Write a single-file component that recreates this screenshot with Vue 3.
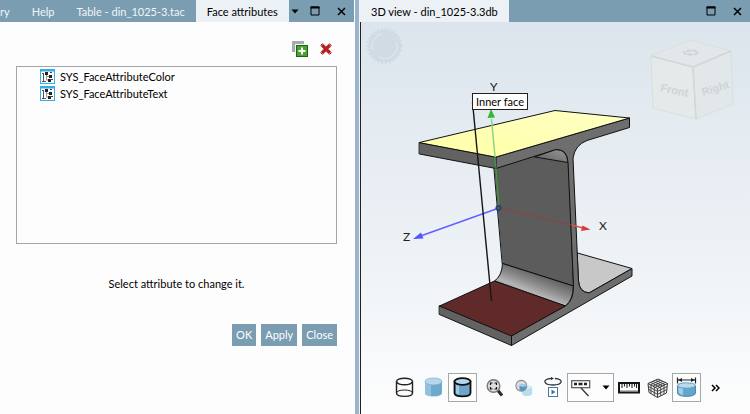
<script setup>
import { ref } from 'vue'

const attributes = ref(['SYS_FaceAttributeColor', 'SYS_FaceAttributeText'])
const selected = ref('')
</script>

<template>
  <main class="workspace">
    <section class="pane" aria-label="Face attributes">
      <header class="bar">
        <nav class="tabs">
          <button class="tab first" type="button">ry</button>
          <button class="tab" type="button">Help</button>
          <button class="tab" type="button">Table - din_1025-3.tac</button>
          <button class="tab active" type="button">Face attributes</button>
        </nav>
        <div class="win">
          <button type="button" class="win-btn narrow" aria-label="Tab list">
            <svg width="8" height="5" viewBox="0 0 8 5"><path d="M0.500 0.500h7L4 4.500z" /></svg>
          </button>
          <button type="button" class="win-btn" aria-label="Maximize">
            <svg width="10" height="10" viewBox="0 0 10 10"><path d="M1 1h8v8H1z" fill="none" stroke="#000" /><path d="M0.500 0.500h9v2h-9z" /></svg>
          </button>
          <button type="button" class="win-btn" aria-label="Close">
            <svg width="9" height="9" viewBox="0 0 9 9"><path d="M1 1l7 7M8 1L1 8" stroke="#000" stroke-width="1.500" /></svg>
          </button>
        </div>
      </header>

      <div class="form">
        <div class="actions">
          <button type="button" aria-label="Add attribute">
            <svg width="16" height="16" viewBox="0 0 16 16">
              <path d="M1.500 11V1.500H12" fill="none" stroke="#a5abb1" stroke-width="3" />
              <path d="M3.500 12V3.500H12" fill="none" stroke="#f4f6f7" />
              <rect x="4.500" y="4.500" width="11" height="11" fill="#45a52b" stroke="#246018" />
              <path d="M10 6.500v7M6.500 10h7" stroke="#fff" stroke-width="2" />
            </svg>
          </button>
          <button type="button" aria-label="Delete attribute">
            <svg width="12" height="12" viewBox="0 0 12 12">
              <path d="M2 2l8 8M10 2l-8 8" stroke="#b3201f" stroke-width="3.200" />
              <path d="M0.500 2.500l2-2M9.500 0.500l2 2M0.500 9.500l2 2M9.500 11.500l2-2" stroke="#8d1b1b" stroke-width="1" />
            </svg>
          </button>
        </div>

        <ul class="list">
          <li v-for="name in attributes" :key="name">
            <button type="button" class="row" @click="selected = name">
              <svg width="15" height="15" viewBox="0 0 15 15">
                <rect x="0.500" y="0.500" width="14" height="14" fill="#fff" stroke="#35ade6" />
                <path d="M1 1h13v1.500H1z" fill="#35ade6" />
                <path d="M2 4.500h2M3.500 4.500v8M2 12.500h4" fill="none" stroke="#555" />
                <path d="M6.500 5v6h2M6.500 7.500h3" fill="none" stroke="#999" />
                <path d="M5 3h3v3H5zM9 6h3v3H9zM8 10h3v3H8z" fill="#222" />
                <path d="M10 3.500h2M10 10.500h3" stroke="#444" />
              </svg>
              <span>{{ name }}</span>
            </button>
          </li>
        </ul>

        <p class="hint">Select attribute to change it.</p>

        <div class="buttons">
          <button type="button">OK</button>
          <button type="button">Apply</button>
          <button type="button">Close</button>
        </div>
      </div>
    </section>

    <div class="splitter"></div>

    <section class="pane" aria-label="3D view">
      <header class="bar">
        <nav class="tabs">
          <button class="tab active" type="button">3D view - din_1025-3.3db</button>
        </nav>
        <div class="win">
          <button type="button" class="win-btn" aria-label="Maximize view">
            <svg width="10" height="10" viewBox="0 0 10 10"><path d="M1 1h8v8H1z" fill="none" stroke="#000" /><path d="M0.500 0.500h9v2h-9z" /></svg>
          </button>
          <button type="button" class="win-btn" aria-label="Close view">
            <svg width="9" height="9" viewBox="0 0 9 9"><path d="M1 1l7 7M8 1L1 8" stroke="#000" stroke-width="1.500" /></svg>
          </button>
        </div>
      </header>

      <div class="viewport">
        <svg class="scene" viewBox="361 22 389 351" role="img" aria-label="I-beam profile">
          <defs>
            <linearGradient id="yellow" x1="0" y1="1" x2="1" y2="0">
              <stop offset="0" stop-color="#ffffa6" />
              <stop offset="1" stop-color="#ffffc4" />
            </linearGradient>
            <linearGradient id="fillet" gradientUnits="userSpaceOnUse" x1="540" y1="274" x2="531" y2="297">
              <stop offset="0" stop-color="#626262" />
              <stop offset="0.450" stop-color="#8c8c8c" />
              <stop offset="0.800" stop-color="#b5b5b5" />
              <stop offset="1" stop-color="#a0a0a0" />
            </linearGradient>
            <linearGradient id="under" x1="0" y1="1" x2="1" y2="0">
              <stop offset="0" stop-color="#5c5c5c" />
              <stop offset="1" stop-color="#999" />
            </linearGradient>
          </defs>

          <!-- navigation wheel -->
          <g fill="none">
            <circle cx="384.500" cy="46" r="16.500" fill="#d0dce5" />
            <circle cx="384.500" cy="46" r="17" stroke="#d0dce5" stroke-width="2" stroke-dasharray="2 2" />
            <path d="M373 50a12 12 0 0 1 9-16M396 42a12 12 0 0 1-17 15" stroke="#dce5ec" stroke-width="1.500" />
          </g>

          <!-- view cube -->
          <g stroke-linejoin="round">
            <path d="M651 56L690 40L731 51L693 67z" fill="#e2e8ea" stroke="#dcdfdf" />
            <path d="M651 56L693 67L696 119L653 108z" fill="#e4e9e9" stroke="#dbdede" />
            <path d="M693 67L731 51L733 104L696 119z" fill="#e2e8e9" stroke="#dbdede" />
            <path d="M651 56L693 67L731 51M693 67L696 119" fill="none" stroke="#d3d5d6" stroke-width="1.500" />
            <ellipse cx="691" cy="52.500" rx="7" ry="2" fill="none" stroke="#d0d2d4" stroke-width="2" stroke-dasharray="5 1" />
          </g>
          <g class="cube-text">
            <text transform="translate(660 91) rotate(12)">Front</text>
            <text transform="translate(703 96) rotate(-17)">Right</text>
          </g>

          <!-- beam -->
          <g stroke="#111" stroke-linejoin="round" stroke-linecap="round">
            <path d="M577.500 253L632 268.500L589 293Q579 292 578.500 281z" fill="#c8c8c8" />
            <path d="M494 165L568 146L573.500 286L502.500 263.500z" fill="#5c5c5c" />
            <path d="M535 157L568 162.500Q567 149 556 149.500z" fill="url(#under)" />
            <path d="M502.500 263.500L573.500 286Q573 300 565.500 306L494.500 281Q502 276 502.500 263.500z" fill="url(#fillet)" />
            <path d="M439.500 306L494.500 281L565.500 306L511.500 336z" fill="#612a2a" />
            <path d="M439.500 306L511.500 336V345.500L439.500 314.500z" fill="#626262" />
            <path d="M496 157L629.500 118V127.500L587 140.500Q575 145 573 158L578.500 281Q579 292 589 293L632 268.500V276L511.500 345.500V336L565.500 306Q574 300 573.500 285L568 162Q567 149 556 149.500L496 168.500z" fill="#6e6e6e" />
            <path d="M419.500 142.500L496 157V168.500L419.500 154z" fill="#626262" />
            <path d="M419.500 142.500L555 110.500L629.500 118L496 157z" fill="url(#yellow)" />
          </g>

          <!-- axes -->
          <g fill="none">
            <path d="M491.500 119L495 157" stroke="#8ad982" stroke-width="1.500" />
            <path d="M495 157L499 207" stroke="#3f9d3c" stroke-width="1.200" />
            <path d="M491 109l-3.500 9 7.500-0.500z" fill="#32ba32" />
            <path d="M499 208L422 235.500" stroke="#6262ff" stroke-width="1.500" />
            <path d="M413 239l8-6.500 2.500 6z" fill="#5555fb" />
            <path d="M499 208L572 225" stroke="#a33737" stroke-dasharray="3 1" />
            <path d="M572 225L583 228" stroke="#dc5151" stroke-width="1.300" />
            <path d="M590.500 229.500l-9.500 1.500 1.500-5.500z" fill="#d93b3b" />
            <circle cx="498.500" cy="208" r="3" fill="#29434f" />
            <circle cx="498.500" cy="208" r="1.500" fill="#3655a8" />
          </g>
          <g class="axis-text">
            <text x="490" y="91">Y</text>
            <text x="599" y="230">X</text>
            <text x="403" y="241">Z</text>
          </g>

          <!-- callout -->
          <path d="M472.500 102L491.500 301" stroke="#161616" stroke-width="1.400" />
          <rect x="472.500" y="93.500" width="55" height="16" fill="#fff" stroke="#222" />
          <text class="callout" x="500" y="106" text-anchor="middle">Inner face</text>
        </svg>

        <div class="toolbar" role="toolbar" aria-label="View tools">
          <button type="button" aria-label="Wireframe">
            <svg width="19" height="21" viewBox="0 0 19 21" fill="none" stroke="#222" stroke-width="1.400">
              <ellipse cx="9.500" cy="4.500" rx="8" ry="3.300" />
              <path d="M1.500 4.500V16C1.500 20.500 17.500 20.500 17.500 16V4.500" />
              <path d="M1.500 16C1.500 12 17.500 12 17.500 16" stroke-width="1" />
            </svg>
          </button>
          <button type="button" aria-label="Shaded">
            <svg width="19" height="21" viewBox="0 0 19 21">
              <path d="M1 4.500V16C1 20.500 18 20.500 18 16V4.500z" fill="#6fa9cc" />
              <path d="M1 4.500V16C1 18 4 19 7 19V6z" fill="#91c2dd" />
              <ellipse cx="9.500" cy="4.500" rx="8.500" ry="3.500" fill="#b4d7e9" stroke="#79aeca" stroke-width="0.700" />
            </svg>
          </button>
          <button type="button" class="framed" aria-label="Shaded with edges">
            <svg width="19" height="21" viewBox="0 0 19 21" stroke="#111" stroke-width="1.800">
              <path d="M1.500 4.500V16C1.500 20.500 17.500 20.500 17.500 16V4.500z" fill="#6fa5cb" />
              <path d="M3 7V16L6 18V8z" fill="#9dc9e4" stroke="none" />
              <ellipse cx="9.500" cy="4.500" rx="8" ry="3.300" fill="#b4d7ec" />
            </svg>
          </button>
          <span class="separator"></span>
          <button type="button" aria-label="Zoom to fit">
            <svg width="17" height="20" viewBox="0 0 17 20">
              <path d="M11.500 12L16 17.500" stroke="#292929" stroke-width="3" />
              <circle cx="7.500" cy="8" r="6.300" fill="#ddd" stroke="#777" stroke-width="1.400" />
              <path d="M4.500 7V5h2M8.500 5h2v2M10.500 9v2h-2M6.500 11h-2V9" fill="none" stroke="#111" stroke-width="1.200" />
            </svg>
          </button>
          <button type="button" aria-label="Transparency">
            <svg width="18" height="20" viewBox="0 0 20 20">
              <path d="M8 9V16C8 20 19 20 19 16V9z" fill="#b9dded" />
              <ellipse cx="13.500" cy="9" rx="5.500" ry="2" fill="#d5eaf3" />
              <circle cx="7" cy="7.500" r="6" fill="#d8dee2" stroke="#888" stroke-width="1.200" />
              <path d="M5 7Q9 4 13 7Q13 11 9.500 13Q7 14 5 12z" fill="#5797bf" />
              <ellipse cx="9" cy="7" rx="4" ry="1.500" fill="#a4cde2" />
            </svg>
          </button>
          <button type="button" aria-label="Play rotation">
            <svg width="20" height="21" viewBox="0 0 20 21" fill="none">
              <path d="M12 1.500C21 2 20 8 10 8S-1 2 8 1.500" stroke="#333" stroke-width="1.300" />
              <path d="M8 0v3l3-1.500z" fill="#222" />
              <rect x="5.500" y="10.500" width="9" height="9" fill="#fff" stroke="#4a7895" />
              <path d="M8.500 12.500v5l4-2.500z" fill="#2e7ba8" />
            </svg>
          </button>
          <button type="button" class="framed split" aria-label="Face labels">
            <svg width="20" height="18" viewBox="0 0 20 18" fill="none">
              <rect x="0.700" y="1.700" width="18" height="7" fill="#fff" stroke="#555" stroke-width="1.200" />
              <path d="M3 5h3M7.500 5h4M13 5h3" stroke="#222" stroke-width="2.500" />
              <path d="M10 9L17.500 17" stroke="#333" stroke-width="1.300" />
            </svg>
            <svg width="8" height="5" viewBox="0 0 8 5"><path d="M0.500 0.500h7L4 4.500z" /></svg>
          </button>
          <button type="button" aria-label="Measure">
            <svg width="22" height="12" viewBox="0 0 22 12">
              <rect x="1" y="1" width="20" height="9.500" fill="#fff" stroke="#151515" stroke-width="2" />
              <path d="M4 2v4M6.500 2v2.500M9 2v4M11.500 2v2.500M14 2v4M16.500 2v2.500M18.500 2v4" stroke="#222" stroke-width="1.100" />
              <path d="M2 9h18" stroke="#777" />
            </svg>
          </button>
          <button type="button" aria-label="Mesh">
            <svg width="22" height="20" viewBox="0 0 22 20" fill="none" stroke="#3c3c3c">
              <path d="M11 1L20.500 5.500L19.500 15L10.500 19.500L2 14.500L1 5.500z" fill="#eee" />
              <path d="M1 5.500L10.500 10.500L20.500 5.500M10.500 10.500V19.500" />
              <path d="M3.500 4.300L13 9.300M6 3.200L15.500 8M8.500 2.200L18 6.800M3.500 6.800L13.500 2.200M6 8L16 3.300M8.200 9.300L18.300 4.400" stroke-width="0.900" />
              <path d="M1.300 8.300L10.500 13.300L20.200 8.500M1.600 11.300L10.500 16.300L19.900 11.500M4 7v9M7.300 9v9M13.700 9v9M17 7v9" stroke-width="0.900" />
            </svg>
          </button>
          <button type="button" class="framed" aria-label="Dimensions">
            <svg width="21" height="21" viewBox="0 0 21 21">
              <path d="M1.500 0.500v6M19.500 0.500v6M2 3h17" stroke="#222" stroke-width="1.200" />
              <path d="M2 3l4-2v4zM19 3l-4-2v4z" fill="#222" />
              <path d="M1.500 8.500V16C1.500 20.500 19.500 20.500 19.500 16V8.500z" fill="#64a5cd" stroke="#4988ae" />
              <path d="M2.500 10V16L7 18.500V11z" fill="#a2cfe8" />
              <ellipse cx="10.500" cy="8.500" rx="9" ry="2.700" fill="#b8dced" stroke="#639dbc" />
            </svg>
          </button>
          <button type="button" aria-label="More tools">
            <svg width="9" height="8" viewBox="0 0 9 8" fill="none" stroke="#000" stroke-width="1.500"><path d="M1 1l3 3-3 3M5 1l3 3-3 3" /></svg>
          </button>
        </div>
      </div>
    </section>
  </main>
</template>

<style>
body {
  margin: 0;
}
</style>

<style scoped>
.workspace {
  display: grid;
  grid-template-columns: minmax(0, 354fr) 6px minmax(0, 390fr);
  min-height: 100vh;
  background: #fdfdfd;
  color: #000;
  font-family: Lato, "Open Sans", sans-serif;
  font-size: 11px;
  line-height: 16px;
}

button {
  margin: 0;
  padding: 0;
  border: 0;
  background: none;
  color: inherit;
  font: inherit;
}

svg {
  display: block;
  flex: none;
}

.pane {
  display: flex;
  flex-direction: column;
  min-width: 0;
}

.bar {
  display: flex;
  justify-content: space-between;
  height: 22px;
  background: #7b9db2;
}

.tabs {
  display: flex;
  min-width: 0;
}

.tab {
  padding: 2px 11px 0;
  color: #f0f6fa;
  white-space: nowrap;
}

.tab.first {
  padding-left: 0;
}

.tab.active {
  background: #ebf1f5;
  color: #000;
}

.win {
  display: flex;
  align-items: center;
}

.win-btn {
  display: flex;
  justify-content: center;
  width: 26px;
}

.win-btn.narrow {
  width: 14px;
}

.splitter {
  margin-left: 1px;
  border-right: 1px solid #f2f6f8;
  background: #9ab4c9;
}

.form {
  display: flex;
  flex-direction: column;
  padding: 19px 17px 0 16px;
}

.actions {
  display: flex;
  align-items: center;
  justify-content: flex-end;
  gap: 12px;
  height: 16px;
  padding-right: 5px;
}

.list {
  min-height: 174px;
  margin: 9px 0 0;
  padding: 1px 0;
  border: 1px solid #a5a5a5;
  list-style: none;
}

.row {
  display: flex;
  align-items: center;
  gap: 5px;
  width: 100%;
  height: 17px;
  padding-left: 23px;
}

.hint {
  margin: 32px 0;
  text-align: center;
}

.buttons {
  display: flex;
  justify-content: flex-end;
  gap: 5px;
}

.buttons button {
  height: 22px;
  padding: 0 4px;
  background: #7b9db2;
  color: #fff;
}

.viewport {
  display: flex;
  flex: 1;
  flex-direction: column;
  border-left: 1px solid #222;
  background: linear-gradient(#dce5ed, #ecf1f5 55%, #fdfdfd);
}

.scene {
  width: 100%;
  height: auto;
}

.cube-text {
  fill: #d0d3d6;
  font-family: "Liberation Sans", sans-serif;
  font-size: 11px;
  font-weight: bold;
}

.axis-text {
  fill: #222;
  font-size: 12px;
}

.callout {
  fill: #000;
  font-size: 11px;
}

.toolbar {
  display: flex;
  height: 29px;
  padding: 0 20px 12px 29px;
}

.toolbar button {
  display: flex;
  flex: none;
  align-items: center;
  justify-content: center;
  box-sizing: border-box;
  width: 29px;
  height: 29px;
}

.toolbar .framed {
  border: 1px solid #a3a8ab;
  background: #fdfdfd;
}

.toolbar .split {
  gap: 11px;
  width: 47px;
}

.separator {
  width: 1px;
  margin: 3px 2px 3px 1px;
  background: #ebebe3;
}
</style>
